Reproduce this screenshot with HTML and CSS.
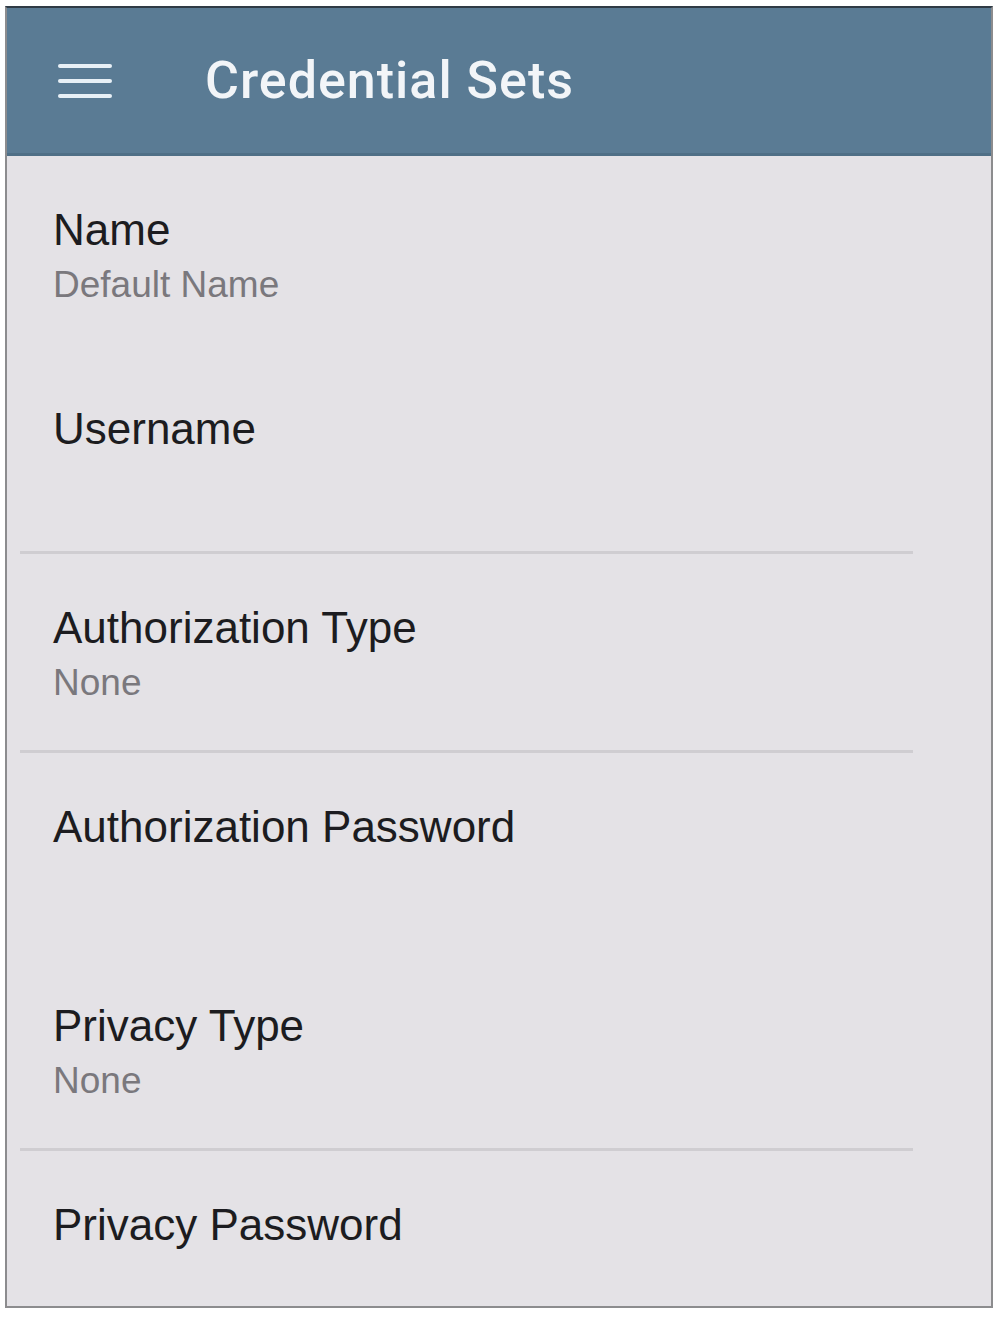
FILE: index.html
```html
<!DOCTYPE html>
<html lang="en">
<head>
<meta charset="UTF-8">
<meta name="viewport" content="width=device-width, initial-scale=1.0">
<title>Credential Sets</title>
<link rel="stylesheet" href="styles.css">
</head>
<body>
    <div class="phone">
        <div class="toolbar">
            <div class="menu-icon">
                <span></span>
                <span></span>
                <span></span>
            </div>
            <h1>Credential Sets</h1>
        </div>

        <div class="list">
            <div class="item">
                <p class="label">Name</p>
                <p class="value">Default Name</p>
            </div>
            <div class="item divided">
                <p class="label">Username</p>
            </div>
            <div class="item divided">
                <p class="label">Authorization Type</p>
                <p class="value">None</p>
            </div>
            <div class="item">
                <p class="label">Authorization Password</p>
            </div>
            <div class="item divided">
                <p class="label">Privacy Type</p>
                <p class="value">None</p>
            </div>
            <div class="item last">
                <p class="label">Privacy Password</p>
            </div>
        </div>
    </div>
</body>
</html>
```

FILE: styles.css
```css
body {
    font-family: "Liberation Sans", Arial, sans-serif;
    background-color: #ffffff;
    margin: 0;
    padding: 6px 5px 0 5px;
}

.phone {
    height: 1302px;
    border: 2px solid #8c8c8e;
    border-top: 2px solid #2f3b45;
    background-color: #e4e2e6;
    box-sizing: border-box;
    overflow: hidden;
}

.toolbar {
    height: 148px;
    background-color: #5a7b94;
    display: flex;
    align-items: center;
    padding-left: 51px;
    box-sizing: border-box;
    border-bottom: 3px solid #4f6f86;
}

.menu-icon {
    width: 54px;
    display: flex;
    flex-direction: column;
    gap: 11px;
    margin-right: 93px;
}

.menu-icon span {
    display: block;
    height: 4px;
    background-color: #e8f0f6;
    border-radius: 2px;
}

.toolbar h1 {
    margin: 0;
    font-family: Roboto, "Liberation Sans", Arial, sans-serif;
    color: #f2f5f8;
    font-size: 52px;
    font-weight: 500;
    letter-spacing: 1px;
}

.list {
    padding-left: 13px;
}

.item {
    height: 199px;
    padding: 50px 0 0 33px;
    box-sizing: border-box;
    margin-right: 78px;
}

.item.divided {
    border-bottom: 3px solid #cfcdd1;
}

.label {
    margin: 0;
    font-size: 44px;
    color: #1c1c20;
    line-height: 48px;
}

.value {
    margin: 10px 0 0 0;
    font-size: 37px;
    color: #7a787d;
    line-height: 42px;
}
```
